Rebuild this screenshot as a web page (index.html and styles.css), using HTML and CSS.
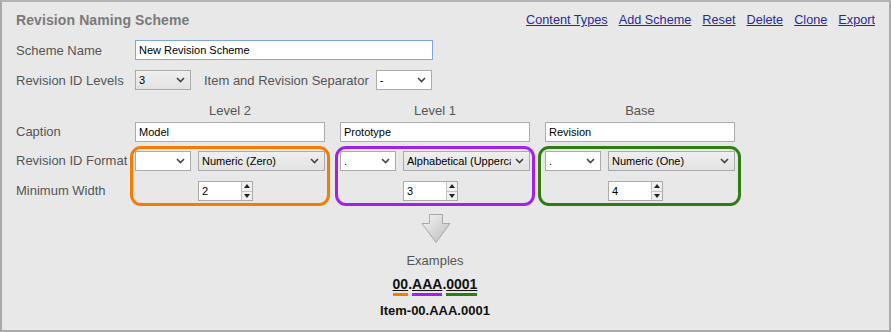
FILE: index.html
```html
<!DOCTYPE html>
<html lang="en">
<head>
  <meta charset="UTF-8" />
  <meta name="viewport" content="width=device-width, initial-scale=1" />
  <title>Revision Naming Scheme</title>
  <link rel="stylesheet" href="styles.css">
</head>
<body>
  <div class="panel">
    <div class="header">
      <h1>Revision Naming Scheme</h1>
      <div class="links">
        <a href="#">Content Types</a>
        <a href="#">Add Scheme</a>
        <a href="#">Reset</a>
        <a href="#">Delete</a>
        <a href="#">Clone</a>
        <a href="#">Export</a>
      </div>
    </div>

    <div class="row row-name">
      <label class="label">Scheme Name</label>
      <input type="text" class="field field-focus name-field" value="New Revision Scheme" />
    </div>

    <div class="row row-levels">
      <label class="label">Revision ID Levels</label>
      <div class="select small grey">
        <select><option>3</option></select>
        <svg class="chev" width="9" height="6" viewBox="0 0 9 6"><path d="M1 1l3.5 3.5L8 1" fill="none" stroke="#444" stroke-width="1.6"/></svg>
      </div>
      <label class="label sep-label">Item and Revision Separator</label>
      <div class="select small">
        <select><option>-</option></select>
        <svg class="chev" width="9" height="6" viewBox="0 0 9 6"><path d="M1 1l3.5 3.5L8 1" fill="none" stroke="#444" stroke-width="1.6"/></svg>
      </div>
    </div>

    <div class="levels">
      <div></div>
      <div class="col-head">Level 2</div>
      <div class="col-head">Level 1</div>
      <div class="col-head">Base</div>

      <label class="label">Caption</label>
      <input type="text" class="field" value="Model" />
      <input type="text" class="field" value="Prototype" />
      <input type="text" class="field" value="Revision" />

      <div class="box-labels">
        <label class="label">Revision ID Format</label>
        <label class="label">Minimum Width</label>
      </div>

      <div class="box orange">
        <div class="format">
          <div class="select small">
            <select><option></option></select>
            <svg class="chev" width="9" height="6" viewBox="0 0 9 6"><path d="M1 1l3.5 3.5L8 1" fill="none" stroke="#444" stroke-width="1.6"/></svg>
          </div>
          <div class="select big grey">
            <select><option>Numeric (Zero)</option></select>
            <svg class="chev" width="9" height="6" viewBox="0 0 9 6"><path d="M1 1l3.5 3.5L8 1" fill="none" stroke="#444" stroke-width="1.6"/></svg>
          </div>
        </div>
        <div class="spinner">
          <input type="text" value="2" />
          <div class="spin"><span class="up"></span><span class="down"></span></div>
        </div>
      </div>

      <div class="box purple">
        <div class="format">
          <div class="select small">
            <select><option>.</option></select>
            <svg class="chev" width="9" height="6" viewBox="0 0 9 6"><path d="M1 1l3.5 3.5L8 1" fill="none" stroke="#444" stroke-width="1.6"/></svg>
          </div>
          <div class="select big grey">
            <select><option>Alphabetical (Uppercase)</option></select>
            <svg class="chev" width="9" height="6" viewBox="0 0 9 6"><path d="M1 1l3.5 3.5L8 1" fill="none" stroke="#444" stroke-width="1.6"/></svg>
          </div>
        </div>
        <div class="spinner">
          <input type="text" value="3" />
          <div class="spin"><span class="up"></span><span class="down"></span></div>
        </div>
      </div>

      <div class="box green">
        <div class="format">
          <div class="select small">
            <select><option>.</option></select>
            <svg class="chev" width="9" height="6" viewBox="0 0 9 6"><path d="M1 1l3.5 3.5L8 1" fill="none" stroke="#444" stroke-width="1.6"/></svg>
          </div>
          <div class="select big grey">
            <select><option>Numeric (One)</option></select>
            <svg class="chev" width="9" height="6" viewBox="0 0 9 6"><path d="M1 1l3.5 3.5L8 1" fill="none" stroke="#444" stroke-width="1.6"/></svg>
          </div>
        </div>
        <div class="spinner">
          <input type="text" value="4" />
          <div class="spin"><span class="up"></span><span class="down"></span></div>
        </div>
      </div>

      <div class="examples">
        <svg class="arrow" width="30" height="30" viewBox="0 0 30 30">
          <defs>
            <linearGradient id="ag" x1="0" y1="0" x2="1" y2="1">
              <stop offset="0" stop-color="#f6f6f6"/>
              <stop offset="1" stop-color="#b9b9b9"/>
            </linearGradient>
          </defs>
          <path d="M8.5 0.5h13v9h7.5L15 28.5 1 9.5h7.5z" fill="url(#ag)" stroke="#a8a8a8" stroke-width="1"/>
        </svg>
        <div class="ex-title">Examples</div>
        <div class="ex-id"><span class="seg seg-orange">00</span>.<span class="seg seg-purple">AAA</span>.<span class="seg seg-green">0001</span></div>
        <div class="ex-item">Item-00.AAA.0001</div>
      </div>
    </div>
  </div>
</body>
</html>
```

FILE: styles.css
```css
body {
  margin: 0;
  font-family: "Liberation Sans", Arial, sans-serif;
}
.panel {
  width: 891px;
  height: 332px;
  box-sizing: border-box;
  border: 2px solid #a9a9a9;
  border-top-color: #b4b4b4;
  background: #e8e8e8;
  padding: 0 14px;
}
.header {
  height: 36px;
  display: flex;
  align-items: center;
  justify-content: space-between;
}
h1 {
  margin: 0;
  font-size: 14px;
  font-weight: bold;
  color: #7a7a7a;
  letter-spacing: 0.1px;
}
.links {
  display: flex;
  gap: 11px;
}
.links a {
  font-size: 12.7px;
  color: #2a2a9c;
}
.label {
  font-size: 13px;
  color: #555;
  white-space: nowrap;
}
.row {
  display: flex;
  align-items: center;
  height: 20px;
}
.row .label:first-child {
  width: 119px;
  flex: none;
}
.row-name {
  margin-top: 2px;
}
.row-levels {
  margin-top: 10px;
}
.sep-label {
  margin: 0 7px 0 13px;
}
.field {
  box-sizing: border-box;
  height: 20px;
  border: 1px solid #ababab;
  background: #fff;
  padding: 0 3px;
  font-family: "Liberation Sans", Arial, sans-serif;
  font-size: 11px;
  color: #000;
  outline: none;
}
.field-focus {
  border-color: #7ea6d8;
}
.name-field {
  width: 298px;
}
.select {
  position: relative;
  height: 20px;
  box-sizing: border-box;
}
.select select {
  -webkit-appearance: none;
  appearance: none;
  width: 100%;
  height: 20px;
  box-sizing: border-box;
  border: 1px solid #ababab;
  border-radius: 0;
  background: #fff;
  padding: 0 18px 0 3px;
  font-family: "Liberation Sans", Arial, sans-serif;
  font-size: 11px;
  color: #000;
  outline: none;
}
.select.grey select {
  background: linear-gradient(#efefef, #e2e2e2);
}
.select .chev {
  position: absolute;
  right: 6px;
  top: 7px;
  pointer-events: none;
}
.select.small {
  width: 56px;
  flex: none;
}
.select.big {
  flex: 1;
  min-width: 0;
}
.levels {
  display: grid;
  grid-template-columns: 104px 190px 190px 190px;
  column-gap: 15px;
  margin-top: 11px;
}
.col-head {
  height: 20px;
  line-height: 20px;
  text-align: center;
  font-size: 13px;
  color: #555;
}
.levels > .label {
  line-height: 20px;
  margin-top: 1px;
}
.levels > .field {
  width: 190px;
  margin-top: 1px;
}
.box-labels {
  display: flex;
  flex-direction: column;
  gap: 10px;
  padding-top: 9px;
}
.box-labels .label {
  line-height: 20px;
}
.box {
  margin: 4px -5px 0;
  height: 60px;
  box-sizing: border-box;
  border: 3px solid;
  border-radius: 11px;
  padding: 2px;
}
.orange { border-color: #f57c00; }
.purple { border-color: #a11ff0; }
.green { border-color: #2e7c12; margin-left: -7px; margin-right: -6px; padding-left: 4px; padding-right: 3px; }
.format {
  display: flex;
  gap: 7px;
}
.spinner {
  display: flex;
  width: 55px;
  height: 20px;
  box-sizing: border-box;
  border: 1px solid #ababab;
  background: #fff;
  margin: 10px 0 0 63px;
}
.spinner input {
  width: 36px;
  border: none;
  padding: 0 3px;
  font-family: "Liberation Sans", Arial, sans-serif;
  font-size: 11px;
  outline: none;
  background: transparent;
}
.spin {
  flex: 1;
  display: flex;
  flex-direction: column;
  border-left: 1px solid #c4c4c4;
  background: #f0f0f0;
}
.spin span {
  flex: 1;
  display: flex;
  align-items: center;
  justify-content: center;
}
.spin .up {
  border-bottom: 1px solid #c4c4c4;
}
.spin .up::after {
  content: "";
  border: 3px solid transparent;
  border-bottom: 4px solid #222;
  border-top: 0;
}
.spin .down::after {
  content: "";
  border: 3px solid transparent;
  border-top: 4px solid #222;
  border-bottom: 0;
}
.examples {
  grid-column: 3;
  display: flex;
  flex-direction: column;
  align-items: center;
  margin-top: 8px;
}
.arrow {
  display: block;
  margin-left: 2px;
}
.ex-title {
  margin-top: 9px;
  font-size: 13px;
  color: #555;
  line-height: 16px;
}
.ex-id {
  margin-top: 7px;
  font-size: 14px;
  font-weight: bold;
  color: #111;
  line-height: 16px;
}
.seg {
  text-decoration: underline;
  display: inline-block;
  padding-bottom: 1px;
  border-bottom: 3px solid;
}
.seg-orange { border-color: #f57c00; }
.seg-purple { border-color: #a11ff0; }
.seg-green { border-color: #2e7c12; }
.ex-item {
  margin-top: 7px;
  font-size: 13px;
  font-weight: bold;
  color: #111;
  line-height: 16px;
}
```
